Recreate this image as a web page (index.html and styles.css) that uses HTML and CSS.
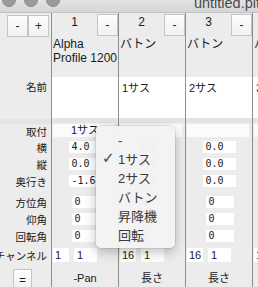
FILE: index.html
```html
<!DOCTYPE html>
<html lang="ja">
<head>
    <meta charset="UTF-8">
    <title>untitled.plt</title>
    <link rel="stylesheet" href="styles.css">
</head>
<body>
    <div class="window">
        <div class="titlebar">
            <div class="lights"><span></span><span></span><span></span></div>
            <div class="title">untitled.plt</div>
        </div>

        <div class="sheet">
            <!-- row labels -->
            <div class="col labels">
                <div class="r head">
                    <button class="btn">-</button>
                    <button class="btn">+</button>
                </div>
                <div class="r title-row"></div>
                <div class="r name"><span class="lbl">名前</span></div>
                <div class="r sep"></div>
                <div class="r mount"><span class="lbl">取付</span></div>
                <div class="r num"><span class="lbl">横</span></div>
                <div class="r num"><span class="lbl">縦</span></div>
                <div class="r num"><span class="lbl">奥行き</span></div>
                <div class="r gap"></div>
                <div class="r num"><span class="lbl">方位角</span></div>
                <div class="r num"><span class="lbl">仰角</span></div>
                <div class="r num"><span class="lbl">回転角</span></div>
                <div class="r chan"><span class="lbl">チャンネル</span></div>
                <div class="r foot"><button class="btn eq">=</button></div>
            </div>

            <!-- fixture 1 -->
            <div class="col">
                <div class="r head"><span class="no">1</span><button class="btn">-</button></div>
                <div class="r title-row">Alpha<br>Profile 1200</div>
                <div class="r name field"></div>
                <div class="r sep"></div>
                <div class="r mount"><span class="pop">1サス</span></div>
                <div class="r num"><span class="in">4.0</span></div>
                <div class="r num"><span class="in">0.0</span></div>
                <div class="r num"><span class="in">-1.6</span></div>
                <div class="r gap"></div>
                <div class="r num"><span class="in ang">0</span></div>
                <div class="r num"><span class="in ang">0</span></div>
                <div class="r num"><span class="in ang">0</span></div>
                <div class="r chan"><span class="ch">1</span><span class="ch wide">1</span></div>
                <div class="r foot"><span class="attr">-Pan</span><span class="stub"></span></div>
            </div>

            <!-- fixture 2 -->
            <div class="col">
                <div class="r head"><span class="no">2</span><button class="btn">-</button></div>
                <div class="r title-row">バトン</div>
                <div class="r name field">1サス</div>
                <div class="r sep"></div>
                <div class="r mount"><span class="pop"></span></div>
                <div class="r num"><span class="in">0.0</span></div>
                <div class="r num"><span class="in">0.0</span></div>
                <div class="r num"><span class="in">0.0</span></div>
                <div class="r gap"></div>
                <div class="r num"><span class="in ang">0</span></div>
                <div class="r num"><span class="in ang">0</span></div>
                <div class="r num"><span class="in ang">0</span></div>
                <div class="r chan"><span class="ch">16</span><span class="ch wide">1</span></div>
                <div class="r foot"><span class="attr">長さ</span><span class="stub"></span></div>
            </div>

            <!-- fixture 3 -->
            <div class="col">
                <div class="r head"><span class="no">3</span><button class="btn">-</button></div>
                <div class="r title-row">バトン</div>
                <div class="r name field">2サス</div>
                <div class="r sep"></div>
                <div class="r mount"><span class="pop"></span></div>
                <div class="r num"><span class="in">0.0</span></div>
                <div class="r num"><span class="in">0.0</span></div>
                <div class="r num"><span class="in">0.0</span></div>
                <div class="r gap"></div>
                <div class="r num"><span class="in ang">0</span></div>
                <div class="r num"><span class="in ang">0</span></div>
                <div class="r num"><span class="in ang">0</span></div>
                <div class="r chan"><span class="ch">16</span><span class="ch wide">1</span></div>
                <div class="r foot"><span class="attr">長さ</span><span class="stub"></span></div>
            </div>

            <!-- fixture 4 (cut off) -->
            <div class="col">
                <div class="r head"><span class="no">4</span><button class="btn">-</button></div>
                <div class="r title-row">バトン</div>
                <div class="r name field">3サス</div>
                <div class="r sep"></div>
                <div class="r mount"><span class="pop"></span></div>
                <div class="r num"><span class="in">0.0</span></div>
                <div class="r num"><span class="in">0.0</span></div>
                <div class="r num"><span class="in">0.0</span></div>
                <div class="r gap"></div>
                <div class="r num"><span class="in ang">0</span></div>
                <div class="r num"><span class="in ang">0</span></div>
                <div class="r num"><span class="in ang">0</span></div>
                <div class="r chan"><span class="ch">16</span><span class="ch wide">1</span></div>
                <div class="r foot"><span class="attr">長さ</span><span class="stub"></span></div>
            </div>
        </div>

        <!-- open popup of 取付 -->
        <ul class="menu">
            <li>-</li>
            <li class="checked">1サス</li>
            <li>2サス</li>
            <li>バトン</li>
            <li>昇降機</li>
            <li>回転</li>
        </ul>
    </div>
</body>
</html>
```

FILE: styles.css
```css
body {
    margin: 0;
    background-color: #ececec;
    font-family: "Liberation Sans", "Noto Sans CJK JP", sans-serif;
    font-size: 11px;
    color: #1a1a1a;
    overflow: hidden;
}

.window {
    position: relative;
    width: 258px;
    height: 287px;
    overflow: hidden;
}

/* Title bar */
.titlebar {
    height: 13px;
    display: flex;
    background: linear-gradient(#e3e3e3, #d6d6d6);
    border-bottom: 1px solid #c2c2c2;
    box-sizing: border-box;
    overflow: hidden;
}

.lights {
    display: flex;
    gap: 8px;
    margin: -7px 0 0 2px;
}

.lights span {
    width: 12px;
    height: 12px;
    border-radius: 50%;
    background-color: #9b9b9b;
    border: 1px solid #8a8a8a;
}

.title {
    flex: none;
    margin-left: auto;
    margin-right: -2px;
    margin-top: -5px;
    font-size: 14.5px;
    color: #4a4a4a;
    white-space: nowrap;
}

/* Sheet */
.sheet {
    display: flex;
}

.col {
    flex: none;
    width: 66px;
    border-left: 1px solid #8e8e8e;
    display: flex;
    flex-direction: column;
}

.col.labels {
    width: 51px;
    border-left: none;
}

.r {
    display: flex;
    align-items: center;
    justify-content: center;
    flex: none;
}

.head { height: 24px; align-items: flex-start; }
.title-row {
    height: 40px;
    display: block;
    font-size: 12px;
    line-height: 14px;
    padding-left: 1px;
    white-space: nowrap;
    overflow: hidden;
}
.name { height: 41px; align-items: flex-start; }
.sep { height: 5px; }
.mount { height: 15px; }
.num { height: 17px; }
.gap { height: 4px; }
.chan { height: 21px; }
.foot { height: 22px; flex-direction: column; justify-content: flex-start; }

.labels .r {
    justify-content: flex-end;
    padding-right: 4px;
    font-size: 10.5px;
}

.labels .head {
    justify-content: flex-start;
    padding: 1px 0 0 7px;
}

.labels .foot {
    align-items: flex-start;
    padding: 3px 0 0 13px;
}

.lbl {
    white-space: nowrap;
}

.name .lbl {
    margin-top: 1px;
}

/* Buttons */
.btn {
    width: 21px;
    height: 22px;
    padding: 0;
    margin: 0;
    border: 1px solid #c4c4c4;
    background: linear-gradient(#fdfdfd, #f1f1f1);
    font-family: "Liberation Sans", sans-serif;
    font-size: 12px;
    color: #222;
    line-height: 1;
}

.col .head .btn {
    margin-top: 1px;
}

.no {
    flex: 1;
    text-align: center;
    font-size: 12px;
    margin-top: 2px;
}

.btn.eq {
    width: 19px;
    height: 22px;
}

/* Fields */
.field {
    background-color: #fff;
    justify-content: flex-start;
    padding: 2px 0 0 3px;
    box-sizing: border-box;
    font-size: 11px;
}

.sep {
    background-color: #e4e4e4;
}

.mount {
    justify-content: flex-start;
}

.pop {
    width: 62px;
    height: 13px;
    margin-left: 1px;
    background-color: #fbfbfb;
    padding-left: 18px;
    box-sizing: border-box;
    line-height: 13px;
}

.in {
    width: 33px;
    height: 12px;
    background-color: #fff;
    font-family: "DejaVu Sans Mono", monospace;
    font-size: 10px;
    line-height: 12px;
    padding-left: 3px;
    box-sizing: border-box;
}

.in.ang {
    width: 28px;
    margin-left: 1px;
}

.chan {
    justify-content: flex-start;
    gap: 5px;
    padding-left: 1px;
}

.ch {
    width: 16px;
    height: 14px;
    background-color: #fff;
    line-height: 14px;
    padding-left: 2px;
    box-sizing: border-box;
    font-size: 11px;
}

.ch.wide {
    width: 23px;
    padding-left: 3px;
}

.attr {
    margin-top: 7px;
    font-size: 11px;
    line-height: 13px;
}

.stub {
    width: 20px;
    height: 4px;
    margin-top: 2px;
    background-color: #fff;
}

/* Popup menu */
.menu {
    position: absolute;
    left: 96px;
    top: 126px;
    width: 79px;
    height: 122px;
    margin: 0;
    padding: 5px 0 0;
    box-sizing: border-box;
    list-style: none;
    background-color: rgba(243, 243, 243, 0.97);
    border-radius: 5px;
    box-shadow: 0 0 0 0.5px rgba(0, 0, 0, 0.15), 0 4px 12px rgba(0, 0, 0, 0.25);
    font-size: 13px;
    color: #3a3a3a;
}

.menu li {
    height: 19px;
    line-height: 19px;
    padding-left: 22px;
    position: relative;
}

.menu li.checked::before {
    content: "✓";
    position: absolute;
    left: 6px;
    top: -1px;
    font-family: "DejaVu Sans", sans-serif;
    font-size: 15px;
    font-weight: bold;
    color: #444;
}
```
